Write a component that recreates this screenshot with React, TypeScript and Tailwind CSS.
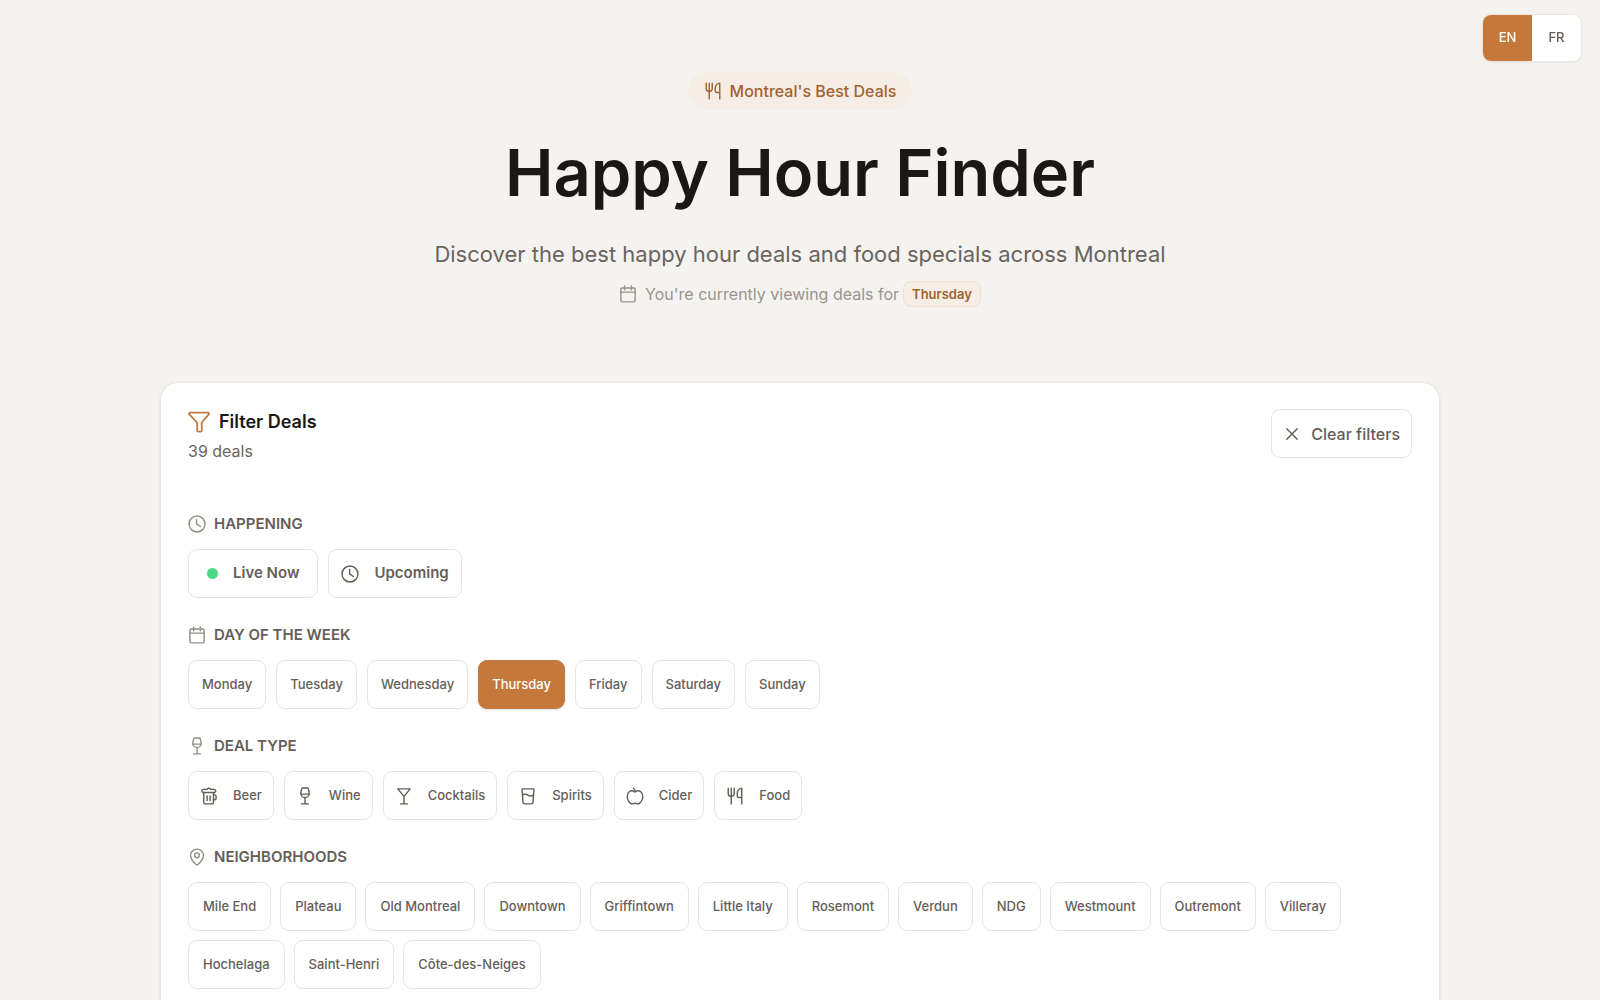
import { useState, type ReactNode } from "react";

type IconName =
  | "food" | "calendar" | "funnel" | "close" | "clock" | "wine"
  | "beer" | "cocktail" | "spirits" | "cider" | "pin";

const paths: Record<IconName, ReactNode> = {
  food: (
    <>
      <path d="M3 1.5v7.5a4 3.5 0 0 0 8 0V1.5M7 1.5v21" />
      <path d="M21 22.5v-21c-3.5.5-6 3.5-6 7.5v3a2 2 0 0 0 2 2h4" />
    </>
  ),
  calendar: (
    <>
      <rect x="2.5" y="4" width="19" height="18.5" rx="1.8" />
      <path d="M2.5 9.5h19M7.5 1.3v5M16.5 1.3v5" />
    </>
  ),
  funnel: (
    <path d="M2.2 1.8h19.6c1 0 1.4 1.1.8 1.9L15 12.6v8.6c0 .7-.5 1.2-1.2 1.2h-2.6c-.7 0-1.2-.5-1.2-1.2v-8.6L1.4 3.7c-.6-.8-.2-1.9.8-1.9Z" />
  ),
  close: <path d="M5 5l14 14M19 5 5 19" />,
  clock: (
    <>
      <circle cx="12" cy="12" r="10.6" />
      <path d="M11.5 6v6.2h.6l4.3 3.2" />
    </>
  ),
  wine: (
    <>
      <path d="M8.2 1.3h7.6c1 2 1.7 4.3 1.7 7.2a5.5 5.5 0 0 1-11 0c0-2.9.7-5.2 1.7-7.2Z" />
      <path d="M6.5 9.500h11M12 14.500v8M7.500 22.500h9" />
    </>
  ),
  beer: (
    <>
      <path d="M9.500 3.200c.4-2 4.400-2 4.800 0h4.500a2 2 0 0 1 0 4.200H4.500a2 2 0 0 1 0-4.200h5Z" />
      <path d="M5 7.400v13.100a2 2 0 0 0 2 2h9a2 2 0 0 0 2-2V7.400" />
      <path d="M18 10.500h1.500a2 2 0 0 1 2 2v2.500a2 2 0 0 1-2 2H18M9.500 12v6M13.500 12v6" />
    </>
  ),
  cocktail: <path d="M3.700 2.500h16.600L12 12.500 3.700 2.500ZM12 12.500v10M7.500 22.500h9" />,
  spirits: (
    <>
      <path d="M4 2.500h16l-1.400 18.200a2 2 0 0 1-2 1.800H7.400a2 2 0 0 1-2-1.800L4 2.500Z" />
      <path d="M4.700 10.500c2.500-1.300 5-1.200 7.300.3s4.800 1.500 7.300.2" />
    </>
  ),
  cider: (
    <>
      <path d="M12 6.500C9.500 5 6.500 4.500 4.300 6.300.8 9.200.9 15 3.600 19.300c1.700 2.700 3.900 4 6.100 2.900 1.500-.7 3.100-.7 4.600 0 2.200 1.100 4.400-.2 6.100-2.900 2.700-4.300 2.800-10.100-.7-13C17.500 4.500 14.500 5 12 6.500Z" />
      <path d="M12 6.500c0-2-.7-3.500-2-4.700" />
    </>
  ),
  pin: (
    <>
      <path d="M12 22.500c-1.300 0-8.700-7.100-8.700-12.500a8.700 8.500 0 0 1 17.400 0c0 5.400-7.400 12.500-8.700 12.500Z" />
      <circle cx="12" cy="9.700" r="3.200" />
    </>
  ),
};

function Icon({ name, className = "size-[18px]" }: { name: IconName; className?: string }) {
  return (
    <svg
      viewBox="0 0 24 24"
      fill="none"
      stroke="currentColor"
      strokeWidth="1.9"
      strokeLinecap="round"
      strokeLinejoin="round"
      aria-hidden="true"
      className={`${className} shrink-0`}
    >
      {paths[name]}
    </svg>
  );
}

const chipBase = "flex h-[49px] items-center rounded-[9px] border font-medium text-[13px]";
const chipOff = "border-[#e7e5e2] bg-white text-[#655e58]";
const chipOn = "border-[#c4783b] bg-[#c4783b] text-white shadow-sm";

function Section({
  icon,
  title,
  gap = "gap-x-[10px]",
  children,
}: {
  icon: IconName;
  title: string;
  gap?: string;
  children: ReactNode;
}) {
  return (
    <section className="flex flex-col gap-3">
      <h3 className="flex h-[26px] items-center gap-2 text-[15px] font-semibold text-[#655e58] uppercase">
        <span className="text-[#958e87]"><Icon name={icon} /></span>
        {title}
      </h3>
      <div className={`flex flex-wrap gap-y-[9px] ${gap}`}>{children}</div>
    </section>
  );
}

const days = ["Monday", "Tuesday", "Wednesday", "Thursday", "Friday", "Saturday", "Sunday"];
const dealTypes: { icon: IconName; label: string }[] = [
  { icon: "beer", label: "Beer" },
  { icon: "wine", label: "Wine" },
  { icon: "cocktail", label: "Cocktails" },
  { icon: "spirits", label: "Spirits" },
  { icon: "cider", label: "Cider" },
  { icon: "food", label: "Food" },
];
const neighborhoods = [
  "Mile End", "Plateau", "Old Montreal", "Downtown", "Griffintown", "Little Italy", "Rosemont",
  "Verdun", "NDG", "Westmount", "Outremont", "Villeray", "Hochelaga", "Saint-Henri", "Côte-des-Neiges",
];

export default function App() {
  const [day, setDay] = useState("Thursday");
  const [lang, setLang] = useState("EN");

  return (
    <div className="min-h-screen bg-[#f5f3ef] px-6 pt-[72px] font-['Inter',sans-serif] text-[#1a1814]">
      <div className="fixed top-3.5 right-[18px] z-10 flex overflow-hidden rounded-[9px] border border-[#e9e7e3] bg-white shadow-xs">
        {["EN", "FR"].map((l) => (
          <button
            key={l}
            type="button"
            aria-pressed={lang === l}
            onClick={() => setLang(l)}
            className={`h-[46px] w-[49px] text-[13px] font-medium ${lang === l ? "bg-[#c4783b] text-white" : "text-[#655e58]"}`}
          >
            {l}
          </button>
        ))}
      </div>

      <header className="flex flex-col items-center text-center">
        <div className="flex h-[38px] items-center gap-2 rounded-full bg-[#f6eee6] px-4 text-base font-medium text-[#a3622f]">
          <Icon name="food" />
          Montreal's Best Deals
        </div>
        <h1 className="mt-7 text-[65px] leading-[70px] font-semibold">Happy Hour Finder</h1>
        <p className="mt-[31px] text-[22px] leading-[30px] text-[#6b645e]">
          Discover the best happy hour deals and food specials across Montreal
        </p>
        <div className="mt-3 flex items-center gap-2 text-base leading-[26px] text-[#9a938c]">
          <Icon name="calendar" />
          <p className="flex items-center gap-1">
            You're currently viewing deals for
            <span className="flex h-[26px] items-center rounded-lg border border-[#eee0d2] bg-[#f6eee6] px-2 text-[13px] font-semibold text-[#a3622f]">
              {day}
            </span>
          </p>
        </div>
      </header>

      <main className="mx-auto mt-[75px] flex max-w-[1280px] flex-col gap-12 rounded-[18px] border border-[#ebe9e5] bg-white px-[27px] pt-[26px] pb-10 shadow-sm">
        <div className="flex items-start justify-between">
          <div>
            <h2 className="flex h-[26px] items-center gap-[9px] text-lg font-semibold">
              <span className="text-[#c4783b]"><Icon name="funnel" className="size-[22px]" /></span>
              Filter Deals
            </h2>
            <p className="mt-1 text-base leading-6 text-[#6b645e]">39 deals</p>
          </div>
          <button type="button" className="flex h-[49px] items-center gap-[10px] rounded-[9px] border border-[#e7e5e2] px-[11px] text-base font-medium text-[#655e58]">
            <Icon name="close" />
            Clear filters
          </button>
        </div>

        <div className="flex flex-col gap-6">
          <Section icon="clock" title="Happening">
            <button type="button" className="flex h-[49px] items-center gap-[15px] rounded-[9px] border border-[#e7e5e2] px-[18px] text-[15px] font-semibold text-[#655e58]">
              <span className="size-[11px] rounded-full bg-[#4ed884]" />
              Live Now
            </button>
            <button type="button" className="flex h-[49px] items-center gap-[15px] rounded-[9px] border border-[#e7e5e2] px-3 text-[15px] font-semibold text-[#655e58]">
              <Icon name="clock" />
              Upcoming
            </button>
          </Section>

          <Section icon="calendar" title="Day of the week">
            {days.map((d) => (
              <button
                key={d}
                type="button"
                aria-pressed={day === d}
                onClick={() => setDay(d)}
                className={`${chipBase} px-[13px] ${day === d ? chipOn : chipOff}`}
              >
                {d}
              </button>
            ))}
          </Section>

          <Section icon="wine" title="Deal type">
            {dealTypes.map((t) => (
              <button key={t.label} type="button" className={`${chipBase} gap-[15px] px-[11px] ${chipOff}`}>
                <Icon name={t.icon} />
                {t.label}
              </button>
            ))}
          </Section>

          <Section icon="pin" title="Neighborhoods" gap="gap-x-[9px]">
            {neighborhoods.map((n) => (
              <button key={n} type="button" className={`${chipBase} px-3.5 ${chipOff}`}>
                {n}
              </button>
            ))}
          </Section>
        </div>
      </main>
    </div>
  );
}
